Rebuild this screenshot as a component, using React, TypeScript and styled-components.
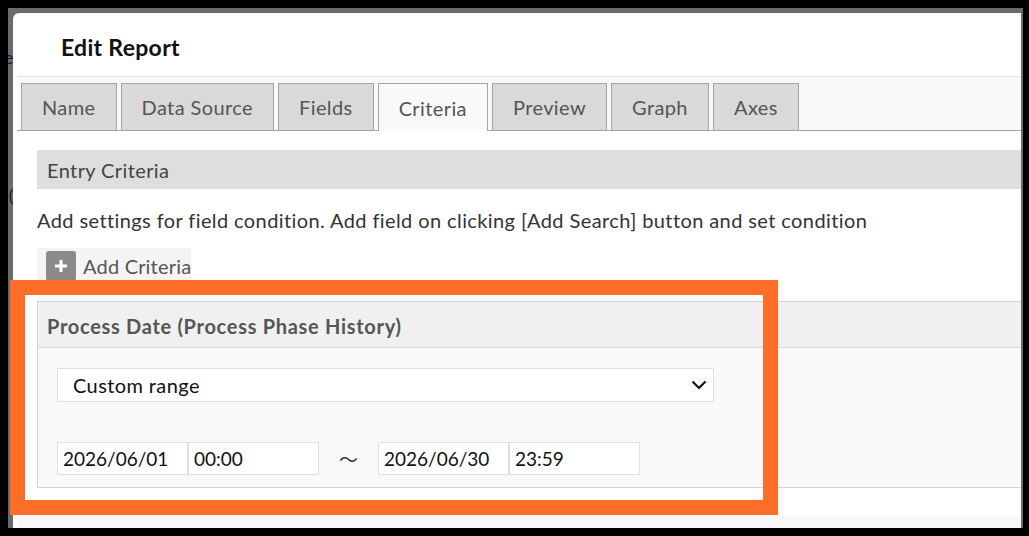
import React from 'react';
import styled, { createGlobalStyle } from 'styled-components';

const GlobalStyle = createGlobalStyle`
  html, body {
    margin: 0;
    padding: 0;
    background: #000;
  }
  body {
    padding: 8px 6px 8px 8px;
    font-family: Lato, "Noto Sans", sans-serif;
    letter-spacing: 0.4px;
  }
  * {
    box-sizing: border-box;
  }
`;

const Screen = styled.div`
  position: relative;
  width: 1015px;
  height: 520px;
  padding-top: 5px;
  background: #6b6b6b;
  display: flex;
  overflow: hidden;
`;

// what is left of the page behind the dialog
const BackdropStrip = styled.div`
  width: 5px;
  flex-shrink: 0;
  overflow: hidden;
  display: flex;
  flex-direction: column;
  align-items: flex-end;
  color: #16203a;
  font-size: 18px;
  line-height: 20px;
`;

const Ghost = styled.span<{ $top: number }>`
  margin-top: ${(p) => p.$top}px;
  margin-right: -1px;
  white-space: nowrap;
`;

const Modal = styled.div`
  flex: 1;
  margin-right: 2px;
  background: #fff;
  border-top-left-radius: 6px;
  padding-left: 4px;
  display: flex;
  flex-direction: column;
  overflow: hidden;
`;

const Header = styled.header`
  height: 64px;
  flex-shrink: 0;
  padding: 5px 0 0 44px;
  display: flex;
  align-items: center;
  border-bottom: 1px solid #e6e6e6;
`;

const Title = styled.h1`
  margin: 0;
  font-size: 23px;
  font-weight: 700;
  letter-spacing: 0.3px;
  color: #111;
`;

const TabBar = styled.nav`
  display: flex;
  gap: 4px;
  padding: 6px 0 0 4px;
  background: #f9f9f9;
  border-bottom: 1px solid #a3a3a3;
  flex-shrink: 0;
`;

const Tab = styled.div<{ $active?: boolean }>`
  height: ${(p) => (p.$active ? 48 : 47)}px;
  margin-bottom: ${(p) => (p.$active ? -1 : 0)}px;
  padding: 0 20px;
  display: flex;
  align-items: center;
  border: 1px solid #a3a3a3;
  border-bottom: none;
  background: ${(p) => (p.$active ? '#f9f9f9' : '#d9d9d9')};
  color: #555;
  font-size: 20px;
`;

const Content = styled.section`
  padding: 19px 0 0 20px;
  flex-shrink: 0;
`;

const SectionBar = styled.div`
  height: 39px;
  padding-left: 10px;
  display: flex;
  align-items: center;
  background: #dedede;
  color: #444;
  font-size: 20px;
`;

const Description = styled.p`
  margin: 18px 0 0;
  line-height: 26px;
  font-size: 20px;
  color: #333;
`;

const AddButton = styled.button`
  margin-top: 15px;
  height: 34px;
  padding: 2px 0 0 9px;
  display: flex;
  align-items: center;
  gap: 7px;
  border: none;
  background: #f4f4f4;
  color: #555;
  font-family: inherit;
  font-size: 20px;
  letter-spacing: 0.2px;
`;

const PlusBox = styled.span`
  width: 30px;
  height: 30px;
  border-radius: 3px;
  background: #8a8a8a;
  display: flex;
  align-items: center;
  justify-content: center;
`;

const CriteriaBox = styled.div`
  margin-top: 19px;
  border: 1px solid #d4d4d4;
  border-right: none;
`;

const BoxHeader = styled.div`
  height: 46px;
  padding: 2px 0 0 9px;
  display: flex;
  align-items: center;
  background: #f0f0f0;
  border-bottom: 1px solid #d8d8d8;
  color: #555;
  font-size: 20px;
  font-weight: 700;
  letter-spacing: 0.7px;
`;

const BoxBody = styled.div`
  padding: 20px 19px 12px;
  background: #f9f9f9;
`;

const Select = styled.div`
  width: 657px;
  height: 34px;
  padding: 0 6px 0 15px;
  display: flex;
  align-items: center;
  justify-content: space-between;
  border: 1px solid #e0e0e0;
  background: #fff;
  color: #111;
  font-size: 20px;
`;

const DateRow = styled.div`
  margin-top: 40px;
  display: flex;
  align-items: center;
`;

const Field = styled.div`
  width: 131px;
  height: 33px;
  padding-left: 5px;
  display: flex;
  align-items: center;
  border: 1px solid #e0e0e0;
  background: #fff;
  color: #111;
  font-size: 19px;
  letter-spacing: 0;
`;

const Tilde = styled.span`
  width: 59px;
  text-align: center;
  color: #333;
  font-size: 19px;
  letter-spacing: 0;
  font-family: "Noto Sans CJK JP", sans-serif;
`;

const Footer = styled.footer`
  margin-top: 28px;
  height: 60px;
  flex-shrink: 0;
  background: #f8f8f8;
`;

// orange callout drawn over the dialog
const Highlight = styled.div`
  position: absolute;
  left: 2px;
  top: 272px;
  width: 768px;
  height: 235px;
  border: 15px solid #ff6e29;
  pointer-events: none;
`;

const tabs = ['Name', 'Data Source', 'Fields', 'Criteria', 'Preview', 'Graph', 'Axes'];

const Chevron = () => (
  <svg width="16" height="10" viewBox="0 0 16 10">
    <polyline points="1.5,1.5 8,8 14.5,1.5" fill="none" stroke="#111" strokeWidth="2.2" />
  </svg>
);

const Plus = () => (
  <svg width="14" height="14" viewBox="0 0 14 14">
    <path d="M7 1v12M1 7h12" stroke="#fff" strokeWidth="3" />
  </svg>
);

const App = () => {
  return (
    <>
      <GlobalStyle />
      <Screen>
        <BackdropStrip>
          <Ghost $top={34}>e</Ghost>
          <Ghost $top={118}>(</Ghost>
        </BackdropStrip>
        <Modal>
          <Header>
            <Title>Edit Report</Title>
          </Header>
          <TabBar>
            {tabs.map((t) => (
              <Tab key={t} $active={t === 'Criteria'}>
                {t}
              </Tab>
            ))}
          </TabBar>
          <Content>
            <SectionBar>Entry Criteria</SectionBar>
            <Description>
              Add settings for field condition. Add field on clicking [Add Search] button and set condition
            </Description>
            <AddButton>
              <PlusBox>
                <Plus />
              </PlusBox>
              Add Criteria
            </AddButton>
            <CriteriaBox>
              <BoxHeader>Process Date (Process Phase History)</BoxHeader>
              <BoxBody>
                <Select>
                  Custom range
                  <Chevron />
                </Select>
                <DateRow>
                  <Field>2026/06/01</Field>
                  <Field>00:00</Field>
                  <Tilde>〜</Tilde>
                  <Field>2026/06/30</Field>
                  <Field>23:59</Field>
                </DateRow>
              </BoxBody>
            </CriteriaBox>
          </Content>
          <Footer />
        </Modal>
        <Highlight />
      </Screen>
    </>
  );
};

export default App;
